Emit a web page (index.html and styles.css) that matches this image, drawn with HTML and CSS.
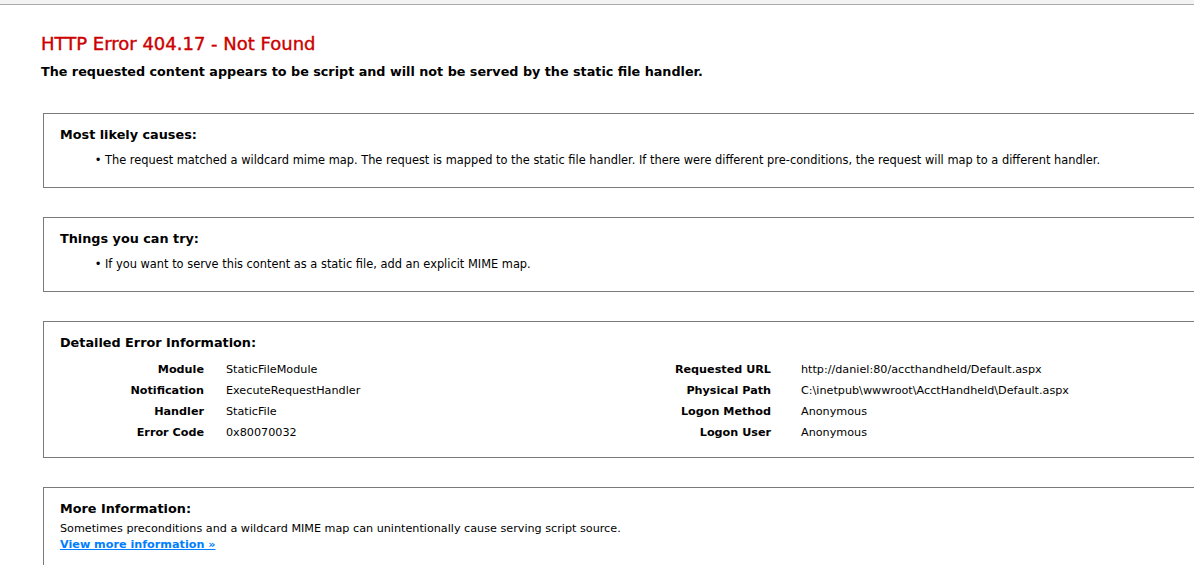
FILE: index.html
```html
<!DOCTYPE html>
<html lang="en">
<head>
  <meta charset="UTF-8">
  <title>IIS 10.0 Detailed Error - 404.17 - Not Found</title>
  <link rel="stylesheet" href="styles.css">
</head>
<body>
  <div class="topbar"></div>

  <div class="content">
    <h2>HTTP Error 404.17 - Not Found</h2>
    <h3>The requested content appears to be script and will not be served by the static file handler.</h3>

    <fieldset class="box">
      <h4>Most likely causes:</h4>
      <ul>
        <li>The request matched a wildcard mime map. The request is mapped to the static file handler. If there were different pre-conditions, the request will map to a different handler.</li>
      </ul>
    </fieldset>

    <fieldset class="box">
      <h4>Things you can try:</h4>
      <ul>
        <li>If you want to serve this content as a static file, add an explicit MIME map.</li>
      </ul>
    </fieldset>

    <fieldset class="box">
      <h4>Detailed Error Information:</h4>
      <div class="details">
        <div class="label">Module</div><div class="value">StaticFileModule</div>
        <div class="label wide">Requested URL</div><div class="value">http://daniel:80/accthandheld/Default.aspx</div>
        <div class="label">Notification</div><div class="value">ExecuteRequestHandler</div>
        <div class="label wide">Physical Path</div><div class="value">C:\inetpub\wwwroot\AcctHandheld\Default.aspx</div>
        <div class="label">Handler</div><div class="value">StaticFile</div>
        <div class="label wide">Logon Method</div><div class="value">Anonymous</div>
        <div class="label">Error Code</div><div class="value">0x80070032</div>
        <div class="label wide">Logon User</div><div class="value">Anonymous</div>
      </div>
    </fieldset>

    <fieldset class="box">
      <h4>More Information:</h4>
      <p>Sometimes preconditions and a wildcard MIME map can unintentionally cause serving script source.</p>
      <p><a href="#">View more information &raquo;</a></p>
    </fieldset>
  </div>
</body>
</html>
```

FILE: styles.css
```css
html, body {
  overflow: hidden;
}
body {
  margin: 0;
  font-size: 11.2px;
  font-family: "DejaVu Sans", Verdana, sans-serif;
  color: #000;
  background: #fff;
}
.topbar {
  height: 4px;
  background: #f3f3f3;
  border-bottom: 1px solid #aaa;
}
.content {
  padding-left: 41px;
}
h2 {
  font-size: 18px;
  font-weight: normal;
  color: #cc0000;
  margin: 27px 0 0;
  line-height: 23px;
  -webkit-text-stroke: 0.4px #cc0000;
}
h3 {
  font-size: 12.75px;
  margin: 9px 0 0;
  line-height: 16px;
}
.box {
  margin: 0 -40px 29px 2px;
  padding: 0 16px 12px;
  border: 1px solid #7a7a7a;
  min-width: 0;
}
.box:first-of-type {
  margin-top: 33px;
}
h4 {
  font-size: 12.8px;
  margin: 13px 0 0;
  line-height: 16px;
}
ul {
  margin: 10px 0 8px;
  padding-left: 45px;
  line-height: 14px;
  font-size: 11.4px;
  list-style-type: "\2022\00a0";
}
p {
  margin: 0;
  line-height: 16px;
}
h4 + p {
  margin-top: 4px;
}
a {
  color: #007eff;
  font-weight: bold;
}
.details {
  display: grid;
  grid-template-columns: 166px 370px 205px 1fr;
  row-gap: 7px;
  margin: 12px 0 5px;
  line-height: 14px;
}
.label {
  font-weight: bold;
  text-align: right;
  padding-right: 22px;
}
.label.wide {
  padding-right: 30px;
}
```
